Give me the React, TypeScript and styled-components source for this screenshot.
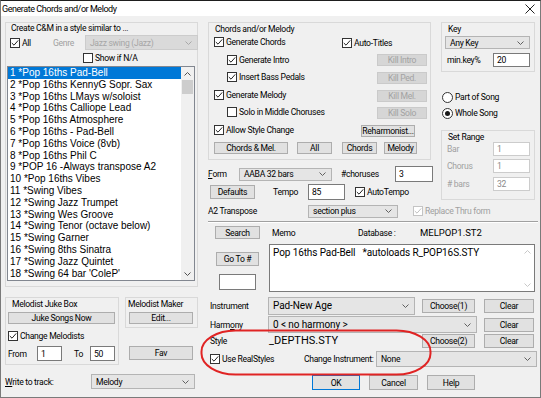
import React from 'react';
import styled, { createGlobalStyle } from 'styled-components';

const UI = `Roboto, "Liberation Sans", Arial, sans-serif`;
const LIST = `"Liberation Sans", Arial, sans-serif`;

const GlobalStyle = createGlobalStyle`
  html, body { margin: 0; padding: 0; background: #fff; }
  * { box-sizing: border-box; }
`;

const Win = styled.div`
  position: relative;
  width: 541px;
  height: 398px;
  display: flex;
  flex-direction: column;
  overflow: hidden;
  border: 1px solid #7a7a7a;
  border-top-color: #1e1e1e;
  background: #f0f0f0;
  font-family: ${UI};
  font-size: 8.6px;
  letter-spacing: -0.3px;
  line-height: 10px;
  color: #000;
`;

const TitleBar = styled.div`
  height: 15px;
  flex: none;
  display: flex;
  align-items: center;
  justify-content: space-between;
  padding: 0 5px 0 1px;
  background: #fff;
  font-size: 9px;
  letter-spacing: -0.45px;
`;

const Body = styled.div`
  flex: 1;
  display: flex;
  padding-left: 4px;
`;

const Col = styled.div<{ $w?: number; $ml?: number; $mt?: number }>`
  display: flex;
  flex-direction: column;
  width: ${(p) => (p.$w ? `${p.$w}px` : 'auto')};
  margin-left: ${(p) => p.$ml ?? 0}px;
  margin-top: ${(p) => p.$mt ?? 0}px;
  flex: none;
`;

const Row = styled.div<{ $h: number; $mt?: number; $pl?: number; $gap?: number; $top?: boolean }>`
  display: flex;
  align-items: ${(p) => (p.$top ? 'flex-start' : 'center')};
  height: ${(p) => p.$h}px;
  margin-top: ${(p) => p.$mt ?? 0}px;
  padding-left: ${(p) => p.$pl ?? 0}px;
  gap: ${(p) => p.$gap ?? 0}px;
  flex: none;
`;

const Frame = styled.div<{ $w: number; $h: number; $mt?: number; $ml?: number }>`
  width: ${(p) => p.$w}px;
  height: ${(p) => p.$h}px;
  margin: ${(p) => p.$mt ?? 0}px 0 0 ${(p) => p.$ml ?? 0}px;
  border: 1px solid #d9d9d9;
  display: flex;
  flex-direction: column;
  flex: none;
`;

const FrameTitle = styled.div<{ $pl?: number; $mt?: number }>`
  height: 10px;
  margin-top: ${(p) => p.$mt ?? 0}px;
  padding-left: ${(p) => p.$pl ?? 5}px;
  white-space: nowrap;
`;

const Cell = styled.span<{ $w?: number; $pl?: number; $muted?: boolean }>`
  display: inline-block;
  width: ${(p) => (p.$w ? `${p.$w}px` : 'auto')};
  padding-left: ${(p) => p.$pl ?? 0}px;
  color: ${(p) => (p.$muted ? '#a0a0a0' : 'inherit')};
  white-space: nowrap;
  flex: none;
`;

const Under = styled.span`
  text-decoration: underline;
`;

const Btn = styled.div<{ $w: number; $h?: number; $ml?: number; $mt?: number; $off?: boolean; $def?: boolean }>`
  width: ${(p) => p.$w}px;
  height: ${(p) => p.$h ?? 13}px;
  margin-left: ${(p) => p.$ml ?? 0}px;
  margin-top: ${(p) => p.$mt ?? 0}px;
  display: flex;
  align-items: center;
  justify-content: center;
  flex: none;
  white-space: nowrap;
  background: ${(p) => (p.$off ? '#d6d6d6' : '#e1e1e1')};
  border: 1px solid ${(p) => (p.$def ? '#0078d7' : p.$off ? '#cacaca' : '#adadad')};
  color: ${(p) => (p.$off ? '#a2a2a2' : '#000')};
`;

const Field = styled.div<{ $w: number; $h?: number; $ml?: number; $mt?: number; $muted?: boolean }>`
  width: ${(p) => p.$w}px;
  height: ${(p) => p.$h ?? 14}px;
  margin-left: ${(p) => p.$ml ?? 0}px;
  margin-top: ${(p) => p.$mt ?? 0}px;
  display: flex;
  align-items: center;
  padding-left: 3px;
  flex: none;
  background: #fff;
  border: 1px solid ${(p) => (p.$muted ? '#cccccc' : '#7a7a7a')};
  color: ${(p) => (p.$muted ? '#8a8a8a' : '#000')};
`;

const ComboBox = styled.div<{ $w: number; $h?: number; $off?: boolean; $big?: boolean }>`
  width: ${(p) => p.$w}px;
  height: ${(p) => p.$h ?? 14}px;
  display: flex;
  align-items: center;
  justify-content: space-between;
  padding: 0 5px 0 4px;
  flex: none;
  background: ${(p) => (p.$off ? '#dadada' : '#e5e5e5')};
  border: 1px solid ${(p) => (p.$off ? '#cccccc' : '#b4b4b4')};
  color: ${(p) => (p.$off ? '#a6a6a6' : '#000')};
  font-size: ${(p) => (p.$big ? 10 : 8.6)}px;
  letter-spacing: ${(p) => (p.$big ? '-0.1px' : '-0.3px')};
`;

const CheckWrap = styled.span<{ $off?: boolean }>`
  display: inline-flex;
  align-items: center;
  gap: 2px;
  color: ${(p) => (p.$off ? '#a0a0a0' : 'inherit')};
  white-space: nowrap;
  flex: none;
`;

const Box = styled.span<{ $off?: boolean }>`
  width: 10px;
  height: 10px;
  display: inline-flex;
  align-items: center;
  justify-content: center;
  background: #fff;
  border: 1px solid ${(p) => (p.$off ? '#c4c4c4' : '#333')};
  flex: none;
`;

const Dot = styled.span<{ $on?: boolean }>`
  width: 11px;
  height: 11px;
  border-radius: 50%;
  border: 1px solid #333;
  background: #fff;
  display: inline-flex;
  align-items: center;
  justify-content: center;
  flex: none;
  &::after {
    content: '';
    width: 5px;
    height: 5px;
    border-radius: 50%;
    background: ${(p) => (p.$on ? '#1a1a1a' : 'transparent')};
  }
`;

const ListBox = styled.div`
  margin: 3px 0 0 1px;
  width: 188px;
  height: 215px;
  display: flex;
  background: #fff;
  border: 1px solid #828790;
  flex: none;
`;

const Items = styled.div`
  flex: 1;
  font-family: ${LIST};
  font-size: 10px;
  letter-spacing: 0;
`;

const Item = styled.div<{ $sel?: boolean }>`
  height: 11.8px;
  line-height: 11.8px;
  padding-left: 2px;
  white-space: nowrap;
  background: ${(p) => (p.$sel ? '#0078d7' : 'transparent')};
  color: ${(p) => (p.$sel ? '#fff' : '#000')};
`;

const ScrollBar = styled.div<{ $bg?: string }>`
  width: 13px;
  display: flex;
  flex-direction: column;
  justify-content: space-between;
  background: ${(p) => p.$bg ?? '#f0f0f0'};
`;

const ScrollTop = styled.div`
  display: flex;
  flex-direction: column;
`;

const Arrow = styled.div`
  height: 13px;
  display: flex;
  align-items: center;
  justify-content: center;
`;

const Thumb = styled.div`
  height: 14px;
  margin: 0 1px;
  background: #cdcdcd;
`;

const Memo = styled.div`
  width: 266px;
  height: 48px;
  display: flex;
  background: #fff;
  border: 1px solid #7a7a7a;
  font-size: 10px;
  letter-spacing: -0.1px;
`;

const MemoText = styled.div`
  flex: 1;
  padding: 3px 0 0 3px;
  white-space: pre;
`;

const Sep = styled.div`
  height: 2px;
  margin: 3px 0 0 1px;
  border-top: 1px solid #a0a0a0;
  border-bottom: 1px solid #fff;
`;

const BigText = styled.span<{ $size: number }>`
  font-size: ${(p) => p.$size}px;
  letter-spacing: 0;
  white-space: nowrap;
`;

const StyleName = styled(BigText)`
  flex: 1;
`;

const Ellipse = styled.svg`
  position: absolute;
  left: 199px;
  top: 328px;
  pointer-events: none;
`;

const Chevron = ({ c = '#606060', up = false }: { c?: string; up?: boolean }) => (
  <svg width="7" height="4" viewBox="0 0 7 4">
    <path d={up ? 'M0.5 3.5 L3.5 0.5 L6.5 3.5' : 'M0.5 0.5 L3.5 3.5 L6.5 0.5'} stroke={c} fill="none" strokeWidth="1" />
  </svg>
);

const Check = ({ label, on, off }: { label: React.ReactNode; on?: boolean; off?: boolean }) => (
  <CheckWrap $off={off}>
    <Box $off={off}>
      {on && (
        <svg width="8" height="8" viewBox="0 0 8 8">
          <path d="M0.8 4 L3 6.2 L7.2 1.4" stroke={off ? '#c0c0c0' : '#222'} fill="none" strokeWidth="1" />
        </svg>
      )}
    </Box>
    {label}
  </CheckWrap>
);

const Radio = ({ label, on }: { label: string; on?: boolean }) => (
  <CheckWrap>
    <Dot $on={on} />
    {label}
  </CheckWrap>
);

const Combo = (p: { w: number; h?: number; off?: boolean; big?: boolean; children?: React.ReactNode }) => (
  <ComboBox $w={p.w} $h={p.h} $off={p.off} $big={p.big}>
    <span>{p.children}</span>
    <Chevron c={p.off ? '#a8a8a8' : '#606060'} />
  </ComboBox>
);

const styles = [
  '1 *Pop 16ths Pad-Bell',
  '2 *Pop 16ths KennyG Sopr. Sax',
  '3 *Pop 16ths LMays w/soloist',
  '4 *Pop 16ths Calliope Lead',
  '5 *Pop 16ths Atmosphere',
  '6 *Pop 16ths - Pad-Bell',
  '7 *Pop 16ths Voice (8vb)',
  '8 *Pop 16ths Phil C',
  '9 *POP 16 -Always transpose A2',
  '10 *Pop 16ths Vibes',
  '11 *Swing Vibes',
  '12 *Swing Jazz Trumpet',
  '13 *Swing Wes Groove',
  '14 *Swing Tenor (octave below)',
  '15 *Swing Garner',
  '16 *Swing 8ths Sinatra',
  '17 *Swing Jazz Quintet',
  "18 *Swing 64 bar 'ColeP'",
];

const chordRows: { label: string; on: boolean; indent: boolean; kill: string }[] = [
  { label: 'Generate Intro', on: true, indent: true, kill: 'Kill Intro' },
  { label: 'Insert Bass Pedals', on: true, indent: true, kill: 'Kill Ped.' },
  { label: 'Generate Melody', on: true, indent: false, kill: 'Kill Mel.' },
  { label: 'Solo in Middle Choruses', on: false, indent: true, kill: 'Kill Solo' },
];

export default function App() {
  return (
    <>
      <GlobalStyle />
      <Win>
        <TitleBar>
          <span>Generate Chords and/or Melody</span>
          <svg width="10" height="10" viewBox="0 0 10 10">
            <path d="M0.5 0.5 L9.5 9.5 M9.5 0.5 L0.5 9.5" stroke="#222" strokeWidth="1" />
          </svg>
        </TitleBar>
        <Body>
          {/* left column */}
          <Col $w={193}>
            <Frame $w={193} $h={265} $mt={6}>
              <FrameTitle $pl={5}>Create C&amp;M in a style similar to ...</FrameTitle>
              <Row $h={15} $mt={2} $pl={4}>
                <Check label="All" on />
                <Cell $pl={22} $w={54} $muted>Genre</Cell>
                <Combo w={113} h={15} off>Jazz swing (Jazz)</Combo>
              </Row>
              <Row $h={11} $mt={2} $pl={77}>
                <Check label="Show if N/A" />
              </Row>
              <ListBox>
                <Items>
                  {styles.map((s, i) => (
                    <Item key={s} $sel={i === 0}>{s}</Item>
                  ))}
                </Items>
                <ScrollBar>
                  <ScrollTop>
                    <Arrow><Chevron up c="#505050" /></Arrow>
                    <Thumb />
                  </ScrollTop>
                  <Arrow><Chevron c="#505050" /></Arrow>
                </ScrollBar>
              </ListBox>
            </Frame>

            <Row $h={68} $mt={10} $gap={6} $top>
              <Frame $w={114} $h={68}>
                <FrameTitle $pl={6} $mt={1}>Melodist Juke Box</FrameTitle>
                <Row $h={12} $mt={3} $pl={2}>
                  <Btn $w={107} $h={12}>Juke Songs Now</Btn>
                </Row>
                <Row $h={10} $mt={7} $pl={2}>
                  <Check label="Change Melodists" on />
                </Row>
                <Row $h={15} $mt={5} $pl={2}>
                  <Cell $w={29}>From</Cell>
                  <Field $w={25} $h={15}>1</Field>
                  <Cell $w={28} $pl={12}>To</Cell>
                  <Field $w={25} $h={15}>50</Field>
                </Row>
              </Frame>
              <Col $w={73}>
                <Frame $w={73} $h={31}>
                  <FrameTitle $pl={2} $mt={1}>Melodist Maker</FrameTitle>
                  <Row $h={12} $mt={3} $pl={3}>
                    <Btn $w={64} $h={12}>Edit...</Btn>
                  </Row>
                </Frame>
                <Row $h={14} $mt={18} $pl={4}>
                  <Btn $w={64} $h={14}>Fav</Btn>
                </Row>
              </Col>
            </Row>

            <Row $h={15} $mt={9}>
              <Cell $w={86}><Under>W</Under>rite to track:</Cell>
              <Combo w={104} h={15}>Melody</Combo>
            </Row>
          </Col>

          {/* right area */}
          <Col $w={331} $ml={9}>
            <Row $h={184} $top>
              <Col $w={230}>
                <Frame $w={223} $h={138} $mt={6} $ml={1}>
                  <FrameTitle $pl={6} $mt={1}>Chords and/or Melody</FrameTitle>
                  <Row $h={17.6} $pl={5}>
                    <Cell $w={128}><Check label="Generate Chords" on /></Cell>
                    <Check label="Auto-Titles" on />
                  </Row>
                  {chordRows.map((r) => (
                    <Row key={r.label} $h={17.6} $pl={r.indent ? 18 : 5}>
                      <Cell $w={r.indent ? 150 : 163}><Check label={r.label} on={r.on} /></Cell>
                      <Btn $w={50} $h={12} $off>{r.kill}</Btn>
                    </Row>
                  ))}
                  <Row $h={17.6} $pl={5}>
                    <Cell $w={147}><Check label="Allow Style Change" on /></Cell>
                    <Btn $w={54} $h={12}>Reharmonist...</Btn>
                  </Row>
                  <Row $h={17.6} $pl={5}>
                    <Btn $w={74} $h={12}>Chords &amp; Mel.</Btn>
                    <Btn $w={35} $h={12} $ml={9}>All</Btn>
                    <Btn $w={35} $h={12} $ml={10}>Chords</Btn>
                    <Btn $w={33} $h={12} $ml={7}>Melody</Btn>
                  </Row>
                </Frame>
                <Row $h={16} $mt={6} $pl={1}>
                  <Cell $w={31}><Under>F</Under>orm</Cell>
                  <Combo w={93} h={13}>AABA 32 bars</Combo>
                  <Cell $w={63} $pl={9}>#choruses</Cell>
                  <Field $w={38} $h={16}>3</Field>
                </Row>
                <Row $h={16} $mt={2} $pl={3}>
                  <Btn $w={45} $h={14}>Defaults</Btn>
                  <Cell $w={53} $pl={18}>Tempo</Cell>
                  <Field $w={37} $h={16}>85</Field>
                  <Cell $pl={10}><Check label="AutoTempo" on /></Cell>
                </Row>
              </Col>
              <Col $w={94} $ml={4}>
                <Frame $w={94} $h={50} $mt={6}>
                  <FrameTitle $pl={6} $mt={1}>Key</FrameTitle>
                  <Row $h={13} $mt={2} $pl={3}>
                    <Combo w={85} h={13}>Any Key</Combo>
                  </Row>
                  <Row $h={14} $mt={4} $pl={5}>
                    <Cell $w={46}>min.key%</Cell>
                    <Field $w={37} $h={14}>20</Field>
                  </Row>
                </Frame>
                <Row $h={14} $mt={18} $pl={1}>
                  <Radio label="Part of Song" />
                </Row>
                <Row $h={14} $mt={2} $pl={1}>
                  <Radio label="Whole Song" on />
                </Row>
                <Frame $w={94} $h={70} $mt={10}>
                  <FrameTitle $pl={6} $mt={1}>Set Range</FrameTitle>
                  <Row $h={14} $mt={0} $pl={5}>
                    <Cell $w={46} $muted>Bar</Cell>
                    <Field $w={37} $muted>1</Field>
                  </Row>
                  <Row $h={14} $mt={3} $pl={5}>
                    <Cell $w={46} $muted>Chorus</Cell>
                    <Field $w={37} $muted>1</Field>
                  </Row>
                  <Row $h={14} $mt={4} $pl={5}>
                    <Cell $w={46} $muted># bars</Cell>
                    <Field $w={37} $muted>32</Field>
                  </Row>
                </Frame>
              </Col>
            </Row>

            <Row $h={14} $mt={4} $pl={1}>
              <Cell $w={100}>A2 Transpose</Cell>
              <Combo w={90} h={13}>section plus</Combo>
              <Cell $pl={15}><Check label="Replace Thru form" on off /></Cell>
            </Row>
            <Sep />

            <Row $h={13} $mt={3} $pl={8}>
              <Btn $w={45} $h={13}>Search</Btn>
              <Cell $w={98} $pl={12}>Memo</Cell>
              <Cell $w={62}>Database :</Cell>
              <BigText $size={9.5}>MELPOP1.ST2</BigText>
            </Row>

            <Row $h={48} $mt={5} $top>
              <Col $w={62}>
                <Btn $w={43} $h={14} $ml={9} $mt={8}>Go To #</Btn>
                <Field $w={37} $h={16} $ml={12} $mt={8} />
              </Col>
              <Memo>
                <MemoText>Pop 16ths Pad-Bell   *autoloads R_POP16S.STY</MemoText>
                <ScrollBar $bg="#fff">
                  <Arrow><Chevron up c="#c8c8c8" /></Arrow>
                  <Arrow><Chevron c="#c8c8c8" /></Arrow>
                </ScrollBar>
              </Memo>
            </Row>

            <Row $h={18} $mt={5} $pl={3}>
              <Cell $w={58}>Instrument</Cell>
              <Combo w={147} h={18} big>Pad-New Age</Combo>
              <Btn $w={53} $h={14} $ml={7}>Choose(1)</Btn>
              <Btn $w={50} $h={14} $ml={9}>Clear</Btn>
            </Row>
            <Row $h={17} $mt={1} $pl={3}>
              <Cell $w={58}>Harm<Under>o</Under>ny</Cell>
              <Combo w={209} h={17} big>0 &lt; no harmony &gt;</Combo>
              <Btn $w={50} $h={14} $ml={7}>Clear</Btn>
            </Row>
            <Row $h={14} $mt={1} $pl={3}>
              <Cell $w={59}>Style</Cell>
              <StyleName $size={11}>_DEPTHS.STY</StyleName>
              <Btn $w={53} $h={14}>Choose(2)</Btn>
              <Btn $w={50} $h={14} $ml={9} style={{ marginRight: 4 }}>Clear</Btn>
            </Row>
            <Row $h={16} $mt={3} $pl={3}>
              <Cell $w={94}><Check label="Use RealStyles" on /></Cell>
              <Cell $w={72}>Change Instrument:</Cell>
              <Combo w={161} h={16}>None</Combo>
            </Row>
            <Row $h={15} $mt={8} $pl={105} $gap={9}>
              <Btn $w={48} $h={15} $def>OK</Btn>
              <Btn $w={49} $h={15}>Cancel</Btn>
              <Btn $w={48} $h={15}>Help</Btn>
            </Row>
          </Col>
        </Body>
        <Ellipse width="232" height="48" viewBox="0 0 232 48">
          <rect x="1.5" y="1.5" width="229" height="44" rx="34" ry="21" fill="none" stroke="#e02424" strokeWidth="2" />
        </Ellipse>
      </Win>
    </>
  );
}
